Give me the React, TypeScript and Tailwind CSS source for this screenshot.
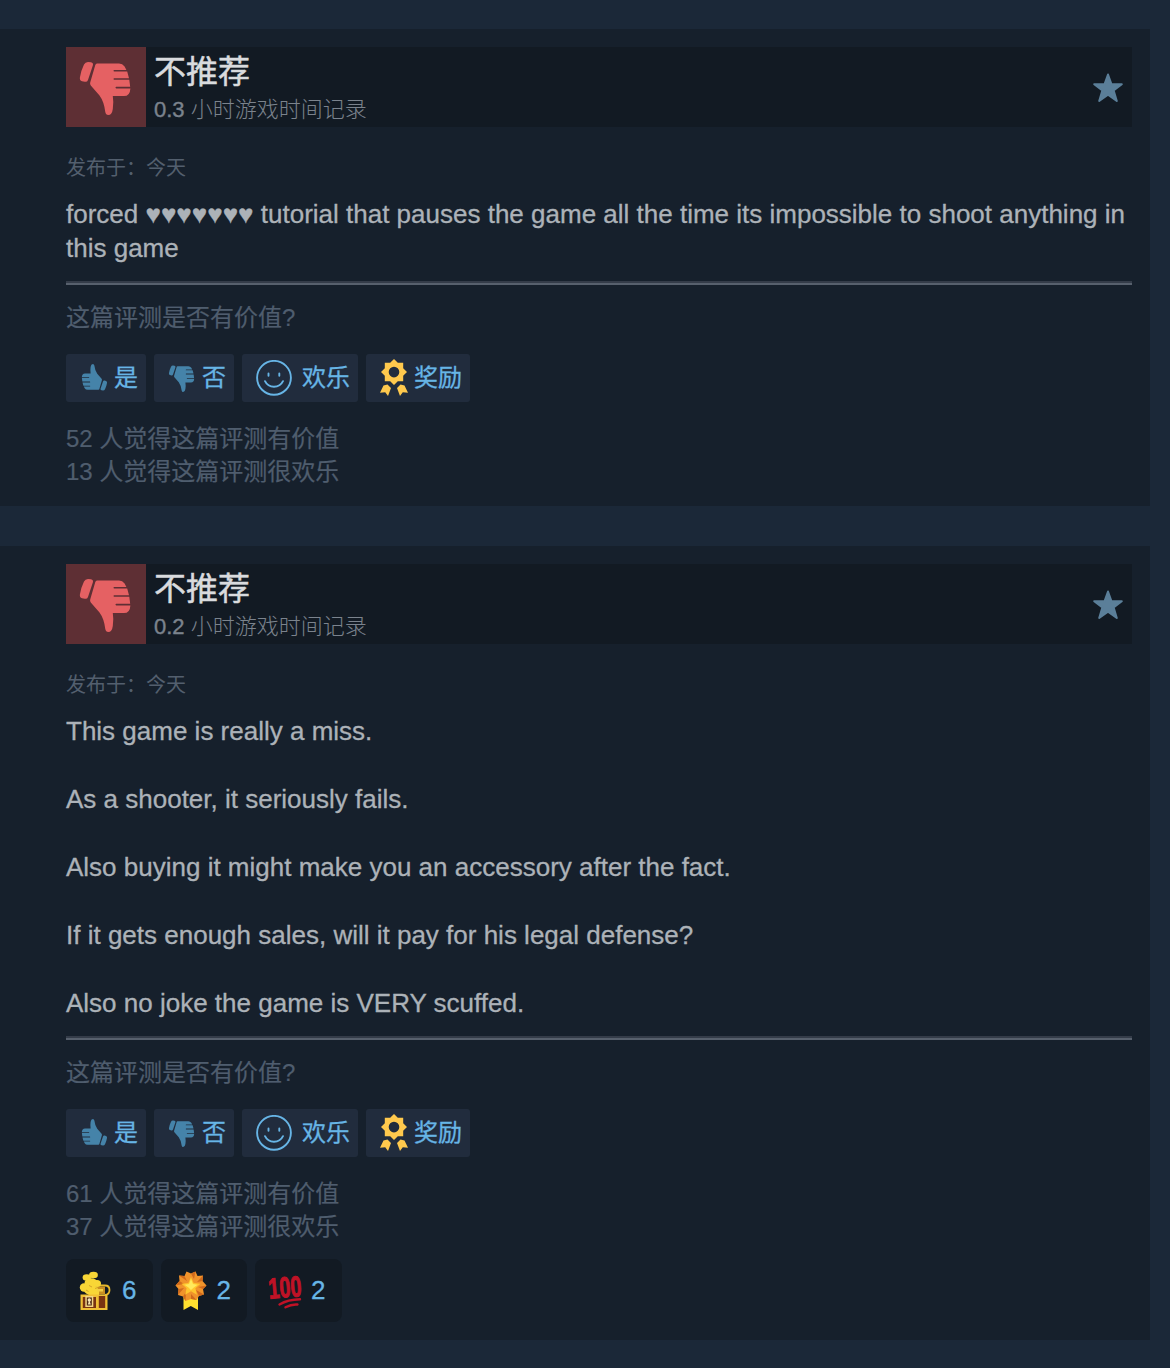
import { ReactNode } from 'react'

type TAward = {
  name: string
  count: number
  icon: ReactNode
}

type TReview = {
  id: number
  hours: string
  paragraphs: string[]
  helpful: number
  funny: number
  awards?: TAward[]
}

function ThumbIcon({ className }: { className?: string }) {
  return (
    <svg viewBox="0 0 80 80" fill="currentColor" className={className}>
      <path d="M18 17.500Q19.200 15 22 15L25 15.300Q27.500 15.800 26.900 18.300L22 33Q21.200 35.200 18.800 34.800L16 34.200Q13.500 33.500 13.900 30.500Q15 23.500 18 17.500Z" />
      <path d="M31 16.500H53Q56.500 16.500 58.600 19.500L60.400 23H48.200Q47.500 23 47.500 23.800T48.200 24.600H61.200L63 31.200H48.200Q47.500 31.200 47.500 32T48.200 32.800H63.300L64.200 39.800H50.200Q49.500 39.800 49.500 40.600T50.200 41.400H64.400Q64 49 58 49H46.800Q47.800 55 46.800 62Q46 68 42.300 68Q39.800 68 39.300 65Q38 54.500 33.500 48.500L24.800 38.500Q23.700 37.200 24.200 35.500L29.300 18Q29.800 16.500 31 16.500Z" />
    </svg>
  )
}

function SmileIcon() {
  return (
    <svg viewBox="0 0 36 36" fill="none" className="mr-2.5 size-9 shrink-0">
      <g stroke="currentColor" strokeLinecap="round" strokeWidth="1.900">
        <circle cx="18" cy="17.800" r="16.900" />
        <path d="M12.500 13.500V15.800M23.300 13.500V15.800" />
        <path d="M9 21.200C12.500 28.500 23.500 28.500 27 21.200" />
      </g>
    </svg>
  )
}

function MedalIcon() {
  return (
    <svg viewBox="0 0 30 38" fill="#ffc94d" className="mr-[5px] h-[38px] w-[30px] shrink-0">
      <path
        fillRule="evenodd"
        d="M15 0L18.800 3.800H24.200V9.200L28 13L24.200 16.800V22.200H18.800L15 26L11.200 22.200H5.800V16.800L2 13L5.800 9.200V3.800H11.200ZM15 7.800A5.300 5.300 0 1 0 15 18.400A5.300 5.300 0 1 0 15 7.800Z"
      />
      <path d="M4.500 26.500L8.500 25.500L12 29L9 37L6.200 33.200L1 33.800Z" />
      <path d="M25.500 26.500L21.500 25.500L18 29L21 37L23.800 33.200L29 33.800Z" />
    </svg>
  )
}

function StarIcon() {
  return (
    <svg viewBox="0 0 32 32" className="mt-px mr-2 size-8" fill="#5b7f99" stroke="#5b7f99">
      <path
        strokeLinejoin="round"
        strokeWidth="2"
        d="M16 2.500L19.400 12.200H29.800L21.600 18.400L24.800 29L16 22.600L7.200 29L10.400 18.400L2.200 12.200H12.600Z"
      />
    </svg>
  )
}

function TreasureIcon() {
  return (
    <svg viewBox="0 0 36 42" className="h-[42px] w-9 shrink-0">
      <path d="M19 15.500H27Q31.500 15.500 31.500 20T27 25" fill="none" stroke="#e8b92c" strokeWidth="1.800" />
      <path d="M17 16.500H27V24.500H17Z" fill="#c98f22" />
      <g fill="#f8d636">
        <ellipse cx="15.500" cy="5" rx="4.400" ry="3.300" />
        <ellipse cx="8.800" cy="7.500" rx="4.200" ry="3.200" />
        <ellipse cx="13" cy="13" rx="6.500" ry="4.800" />
        <ellipse cx="19" cy="13.500" rx="4" ry="3.500" />
        <ellipse cx="6" cy="17.500" rx="4.200" ry="4.200" />
        <ellipse cx="13" cy="20" rx="7" ry="5" />
        <path d="M10 25L18 17L21 20V25Z" />
      </g>
      <path d="M11 15.500L14 17M17 18.500L20 17.500M8 20L10.500 21.500" stroke="#d4a42b" />
      <path d="M19 19H25V21.500H19Z" fill="#f3cf43" />
      <path d="M2.500 24.500H29.500V40H2.500Z" fill="#f0bf35" />
      <path d="M4.800 27H18V38H4.800ZM20.800 26H27.200V38H20.800Z" fill="#793311" />
      <path d="M7.300 26H15.300V37H7.300Z" fill="#f3d583" />
      <path d="M8.800 27.500H13.800V35.500H8.800Z" fill="#4b2614" />
      <circle cx="11.300" cy="30" r="1.700" fill="#f7e6b8" />
      <path d="M11.300 30L12.800 34.500H9.800Z" fill="#f7e6b8" />
    </svg>
  )
}

function RosetteIcon() {
  return (
    <svg viewBox="0 0 36 42" className="h-[42px] w-9 shrink-0">
      <path d="M10.500 25H25V40L17.800 36L10.500 40Z" fill="#ffe02f" />
      <path
        d="M18 3.500L22.500 1.500L24.500 6L30 5.500L29.500 11L33.500 15.500L30 19L31 24.500L26 26L23.500 30L18 29L12.500 31L10 26.500L5 25L5.500 19L2.500 15.500L6.500 11L6 5.500L11.500 6L13.500 1.500Z"
        fill="#f0932b"
      />
      <path
        d="M18 3.500L22.500 1.500L21 9ZM30 5.500L29.500 11L24 12ZM33.500 15.500L30 19L25 17ZM31 24.500L26 26L23 20ZM23.500 30L18 29L18 24ZM12.500 31L10 26.500L13 22ZM5 25L5.500 19L11 18ZM2.500 15.500L6.500 11L11 14ZM6 5.500L11.500 6L14 11Z"
        fill="#d06a1c"
      />
      <path d="M18 7L20.700 13L27.500 13.700L22.400 18.200L23.900 24.800L18 21.300L12.100 24.800L13.600 18.200L8.500 13.700L15.300 13Z" fill="#ffc52e" />
      <path d="M18 9L20 14L24.500 14.700L20.500 17.800L18 20L15.500 17.500L11.500 14.700L16 14Z" fill="#ffe95c" />
    </svg>
  )
}

function HundredIcon() {
  return (
    <svg viewBox="0 0 36 42" className="h-[42px] w-9 shrink-0 overflow-visible">
      <text
        x="1.500"
        y="27.500"
        transform="rotate(-5 17 20)"
        textLength="33"
        lengthAdjust="spacingAndGlyphs"
        fill="#c01226"
        stroke="#c01226"
        strokeWidth="1"
        className="font-['Liberation_Sans'] text-[29px] font-bold"
      >
        100
      </text>
      <path
        d="M12.500 34.500Q21 29.500 33 29.300M18.500 37.300Q24.500 34 30.500 34.500"
        fill="none"
        stroke="#c01226"
        strokeLinecap="round"
        strokeWidth="2.400"
      />
    </svg>
  )
}

const reviews: TReview[] = [
  {
    id: 1,
    hours: '0.3',
    paragraphs: [
      'forced ♥♥♥♥♥♥♥ tutorial that pauses the game all the time its impossible to shoot anything in this game'
    ],
    helpful: 52,
    funny: 13
  },
  {
    id: 2,
    hours: '0.2',
    paragraphs: [
      'This game is really a miss.',
      'As a shooter, it seriously fails.',
      'Also buying it might make you an accessory after the fact.',
      'If it gets enough sales, will it pay for his legal defense?',
      'Also no joke the game is VERY scuffed.'
    ],
    helpful: 61,
    funny: 37,
    awards: [
      { name: 'treasure', count: 6, icon: <TreasureIcon /> },
      { name: 'rosette', count: 2, icon: <RosetteIcon /> },
      { name: 'hundred', count: 2, icon: <HundredIcon /> }
    ]
  }
]

function VoteButton({ className, children }: { className: string; children: ReactNode }) {
  return (
    <button
      className={`flex h-12 items-center whitespace-nowrap rounded-[3px] bg-[#212c3d] text-2xl text-[#67b5e6] [-webkit-text-stroke:0.3px] ${className}`}
    >
      {children}
    </button>
  )
}

function ReviewCard({ hours, paragraphs, helpful, funny, awards }: TReview) {
  return (
    <article className="w-[1150px] bg-[#16202c] py-[18px] pr-[18px] pl-[66px]">
      <header className="flex h-20 items-center bg-[#121a23]">
        <div className="size-20 bg-[#5e2f34]">
          <ThumbIcon className="size-20 text-[#e56163]" />
        </div>
        <div className="ml-2 flex-1 pt-[3px]">
          <h2 className="text-[32px] leading-[42px] text-[#d9dbde] [-webkit-text-stroke:0.5px]">不推荐</h2>
          <p className="text-[22px] leading-[33px] font-light text-[#7b838d]">
            <span className="font-normal [-webkit-text-stroke:0.4px]">{hours}</span> 小时游戏时间记录
          </p>
        </div>
        <StarIcon />
      </header>

      <p className="mt-[27px] text-xl leading-7 text-[#535f6e]">发布于：今天</p>

      <div className="mt-[15px] flex flex-col gap-[34px] text-[26px] leading-[34px] text-[#acb2b8] [-webkit-text-stroke:0.3px]">
        {paragraphs.map((paragraph) => (
          <p key={paragraph}>{paragraph}</p>
        ))}
      </div>

      <div className="mt-4 h-1 border-t-2 border-b-2 border-t-[#343c49] border-b-[#57606d]" />

      <p className="mt-[17px] text-2xl leading-8 text-[#4f5d6e] [-webkit-text-stroke:0.2px]">这篇评测是否有价值?</p>

      <div className="mt-5 flex gap-2">
        <VoteButton className="w-20 pl-2">
          <ThumbIcon className="size-10 shrink-0 rotate-180 text-[#4583a9]" />是
        </VoteButton>
        <VoteButton className="w-20 pl-2">
          <ThumbIcon className="size-10 shrink-0 text-[#4583a9]" />否
        </VoteButton>
        <VoteButton className="w-[116px] pl-3.5">
          <SmileIcon />
          欢乐
        </VoteButton>
        <VoteButton className="w-[104px] pl-[13px]">
          <MedalIcon />
          奖励
        </VoteButton>
      </div>

      <div className="mt-5 text-2xl leading-[33px] text-[#4f5d6e] [-webkit-text-stroke:0.2px]">
        <p>{helpful} 人觉得这篇评测有价值</p>
        <p>{funny} 人觉得这篇评测很欢乐</p>
      </div>

      {awards && (
        <ul className="mt-4 flex gap-2">
          {awards.map((award) => (
            <li
              key={award.name}
              className="flex h-[63px] w-[86.500px] items-center gap-2 rounded-lg bg-[#121a23] pl-3 text-[26px] text-[#67b5e6] [-webkit-text-stroke:0.3px]"
            >
              {award.icon}
              {award.count}
            </li>
          ))}
        </ul>
      )}
    </article>
  )
}

export default function App() {
  return (
    <main className="flex min-h-[1368px] flex-col gap-10 bg-[#1b2838] pt-[29px] font-['Liberation_Sans','Noto_Sans_CJK_SC',sans-serif]">
      {reviews.map((review) => (
        <ReviewCard key={review.id} {...review} />
      ))}
    </main>
  )
}
